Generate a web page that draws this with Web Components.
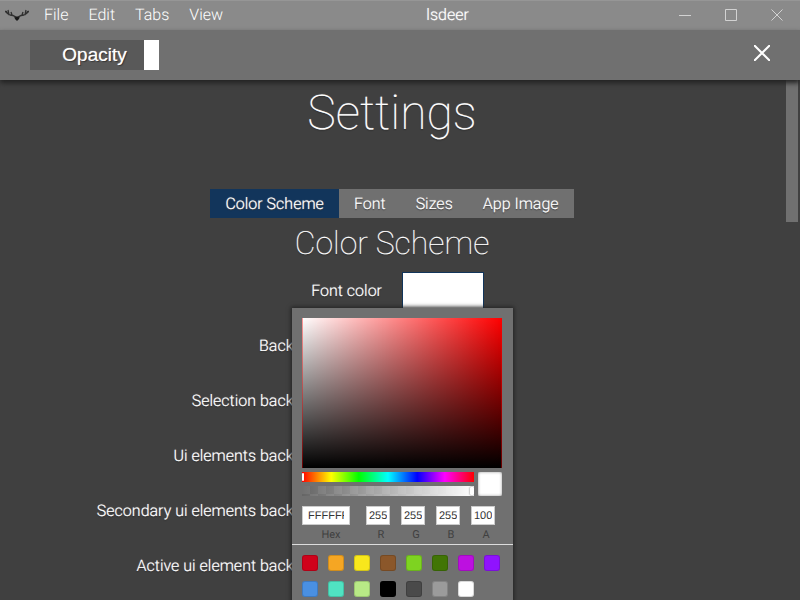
<!DOCTYPE html>
<html lang="en">
<head>
<meta charset="utf-8">
<title>lsdeer</title>
<style>
html, body { margin: 0; height: 100%; }
body { overflow: hidden; background: #404040; color: #fff; font: 16px/20px Roboto, "Liberation Sans", sans-serif; text-rendering: geometricPrecision; }
</style>
</head>
<body>
<deer-app></deer-app>
<script>
function define(name, html, setup) {
  const template = document.createElement('template');
  template.innerHTML = '<style>*{box-sizing:border-box}button,input{font:inherit;color:inherit;margin:0;text-rendering:inherit}button{border:0;padding:0;background:none}</style>' + html;
  customElements.define(name, class extends HTMLElement {
    constructor() {
      super();
      const root = this.attachShadow({ mode: 'open' });
      root.append(template.content.cloneNode(true));
      if (setup) setup(this, root);
    }
  });
}

define('deer-titlebar', `
<style>
:host { display: flex; align-items: center; height: 30px; background: #8a8a8a; box-shadow: inset 0 1px #969696; font-weight: 300; text-shadow: 0 0 1px #ddd; }
nav, .controls { display: flex; align-items: center; }
nav { gap: 20px; padding: 0 10px 0 5px; }
nav svg { margin-right: -5px; }
.title { flex: 1; text-align: center; }
.controls { color: #d2d2d2; }
.controls button { width: 46px; height: 30px; display: grid; place-items: center; }
</style>
<nav>
  <svg width="24" height="14" viewBox="0 0 24 14" aria-hidden="true"><path d="M9 8Q12 9 15 8L14 11L12 13L10 11Z" fill="#181818"/><path d="M11 9Q8 7 5 7Q2 6 1 3M2 5L0 3M4 7L3 2M7 7L6 4M13 9Q16 7 19 7Q22 6 23 3M22 5L24 3M20 7L21 2M17 7L18 4" fill="none" stroke="#303030" stroke-width="1.3"/></svg>
  <slot></slot>
</nav>
<span class="title"><slot name="title"></slot></span>
<div class="controls">
  <button aria-label="Minimize"><svg width="12" height="12"><path d="M0 6.5H12" stroke="currentColor" fill="none"/></svg></button>
  <button aria-label="Maximize"><svg width="12" height="12"><path d="M.5.5H11.5V11.5H.5Z" stroke="currentColor" fill="none"/></svg></button>
  <button aria-label="Close window"><svg width="12" height="12"><path d="M.5.5L11.5 11.5M11.5.5L.5 11.5" stroke="currentColor" fill="none"/></svg></button>
</div>`);

define('deer-menu', `
<style>:host{display:block}button{display:block;line-height:20px}</style><button><slot></slot></button>`);

define('deer-opacity', `
<style>
:host { display: grid; width: 129px; height: 30px; font: 19px/30px "Liberation Sans", sans-serif; text-rendering: auto; }
label, input { grid-area: 1/1; }
label { z-index: 1; text-align: center; pointer-events: none; text-shadow: 1px 1px 1px #333, 0 0 1px #fff; }
input { appearance: none; width: 100%; height: 30px; background: #595959; }
input::-webkit-slider-thumb { appearance: none; width: 15px; height: 30px; background: #fff; }
</style>
<label for="opacity">Opacity</label><input id="opacity" type="range" min="0" max="100" value="100">`);

define('deer-toolbar', `
<style>
:host { display: flex; justify-content: space-between; align-items: center; height: 50px; padding: 0 30px; background: #707070; box-shadow: 0 3px 5px #222; position: relative; z-index: 1; }
button { display: grid; place-items: center; width: 16px; height: 16px; margin-bottom: 4px; }
</style>
<deer-opacity></deer-opacity>
<button aria-label="Close settings"><svg width="16" height="16"><path d="M0 0L16 16M16 0L0 16" stroke="#fff" stroke-width="2"/></svg></button>`);

define('deer-tabs', `
<style>
:host { display: flex; justify-content: center; font-weight: 300; }
div { display: flex; background: #707070; }
button { height: 29px; padding: 1px 15px 0; text-shadow: 0 0 1px #ccc, 0 1px 1px #333; }
[aria-selected=true] { background: #12355b; }
</style>
<div role="tablist">
  <button role="tab" aria-selected="true">Color Scheme</button><button role="tab" aria-selected="false">Font</button><button role="tab" aria-selected="false">Sizes</button><button role="tab" aria-selected="false">App Image</button>
</div>`);

define('deer-field', `
<style>
:host { display: grid; grid-template-columns: 1fr 1fr; column-gap: 20px; align-items: center; height: 36px; font-weight: 300; }
label { padding-top: 2px; text-align: right; white-space: nowrap; text-shadow: 0 0 1px #ccc, 0 1px 1px #222; }
.control { position: relative; width: 82px; height: 36px; }
button { display: block; width: 100%; height: 100%; border: 1px solid #12355b; border-bottom: 0; background: #fff; }
::slotted(deer-color-picker) { position: absolute; top: 100%; left: -110px; z-index: 2; }
</style>
<label for="swatch"><slot></slot></label>
<div class="control"><button id="swatch"></button><slot name="popup"></slot></div>`);

define('deer-value', `
<style>
:host { display: block; font: 11px/14px "Liberation Sans", sans-serif; color: #333; }
input { display: block; width: 100%; height: 19px; padding: 0 3px; border: 0; background: #fff; box-shadow: inset 0 0 0 1px #ccc; }
:host([wide]) input { padding: 0 6px; }
label { display: block; padding: 3px 0 0 6px; text-align: center; font-family: Roboto, sans-serif; color: #404040; }
:host([wide]) label { padding-left: 10px; }
</style>
<input id="value"><label for="value"><slot></slot></label>`,
(host, root) => { root.querySelector('input').value = host.getAttribute('value'); });

define('deer-color-picker', `
<style>
:host { display: block; width: 221px; padding: 10px 0; background: #707070; box-shadow: 0 0 4px 1px #222; }
.area { height: 150px; margin: 0 11px 4px 10px; background: linear-gradient(to top, #000, transparent), linear-gradient(to right, #fff, transparent), #f00; border: solid rgba(255,0,0,.4); border-width: 0 1px; background-clip: border-box; background-origin: border-box; }
.sliders { display: grid; grid-template-columns: 1fr 24px; gap: 4px; margin: 0 11px 10px 10px; }
.bars { display: grid; gap: 4px; }
.bars input { appearance: none; display: block; width: 100%; height: 10px; }
.hue { background: linear-gradient(to right, #f00, #ff0 17%, #0f0 33%, #0ff 50%, #00f 67%, #f0f 83%, #f00); }
.alpha { background: linear-gradient(to right, transparent, #fff), repeating-conic-gradient(#656565 0 25%, #707070 0 50%) 0 0/16px 16px; }
.bars input::-webkit-slider-thumb { appearance: none; width: 4px; height: 8px; border-radius: 1px; background: #fff; box-shadow: 0 0 2px #555; }
.bars .hue::-webkit-slider-thumb { width: 2px; box-shadow: none; }
.bars .alpha { overflow: hidden; }
.preview { height: 24px; background: #fff; box-shadow: inset 0 0 3px #999; border-radius: 2px; }
.values { display: grid; grid-template-columns: 48px 24px 24px 24px 24px; column-gap: 11px; margin: 0 0 2px 10px; }
.values deer-value:nth-child(n+2) { margin-left: 5px; margin-right: -5px; }
.presets { display: grid; grid-template-columns: repeat(8, 16px); gap: 10px; padding: 10px; border-top: 1px solid #ddd; }
.presets button { width: 16px; height: 16px; border-radius: 3px; box-shadow: inset 0 0 0 1px rgba(0,0,0,.15); }
</style>
<div class="area"></div>
<div class="sliders">
  <div class="bars"><input class="hue" type="range" aria-label="Hue" max="360" value="0"><input class="alpha" type="range" aria-label="Alpha" max="100" value="100"></div>
  <div class="preview"></div>
</div>
<div class="values">
  <deer-value wide value="FFFFFF">Hex</deer-value><deer-value value="255">R</deer-value><deer-value value="255">G</deer-value><deer-value value="255">B</deer-value><deer-value value="100">A</deer-value>
</div>
<div class="presets"></div>`,
(host, root) => {
  host.style.fontWeight = '400';
  for (const color of ['#d0021b', '#f5a623', '#f8e71c', '#8b572a', '#7ed321', '#417505', '#bd10e0', '#9013fe', '#4a90e2', '#50e3c2', '#b8e986', '#000', '#4a4a4a', '#9b9b9b', '#fff']) {
    const button = document.createElement('button');
    button.style.background = color;
    button.setAttribute('aria-label', color);
    root.querySelector('.presets').append(button);
  }
});

define('deer-settings', `
<style>
:host { display: flex; flex: 1; min-height: 0; overflow: hidden; }
main { flex: 1; }
h1, h2 { margin: 0; text-align: center; font-weight: 100; text-shadow: 0 0 1px #bbb, 0 1px 1px #222; }
h1 { font-size: 48px; line-height: 66px; margin-bottom: 43px; }
h2 { font-size: 32px; line-height: 40px; margin: 5px 0 9px; }
.fields { display: grid; gap: 19px; }
.rail { width: 16px; padding: 0 2px; }
.thumb { height: 142px; background: #707070; }
</style>
<main>
  <h1>Settings</h1>
  <deer-tabs></deer-tabs>
  <h2>Color Scheme</h2>
  <div class="fields">
    <deer-field>Font color<deer-color-picker slot="popup"></deer-color-picker></deer-field>
    <deer-field>Background color</deer-field>
    <deer-field>Selection background color</deer-field>
    <deer-field>Ui elements background color</deer-field>
    <deer-field>Secondary ui elements background color</deer-field>
    <deer-field>Active ui element background color</deer-field>
  </div>
</main>
<div class="rail"><div class="thumb"></div></div>`);

define('deer-app', `
<style>:host { display: flex; flex-direction: column; height: 100vh; }</style>
<deer-titlebar><deer-menu>File</deer-menu><deer-menu>Edit</deer-menu><deer-menu>Tabs</deer-menu><deer-menu>View</deer-menu><span slot="title">lsdeer</span></deer-titlebar>
<deer-toolbar></deer-toolbar>
<deer-settings></deer-settings>`);
</script>
</body>
</html>
